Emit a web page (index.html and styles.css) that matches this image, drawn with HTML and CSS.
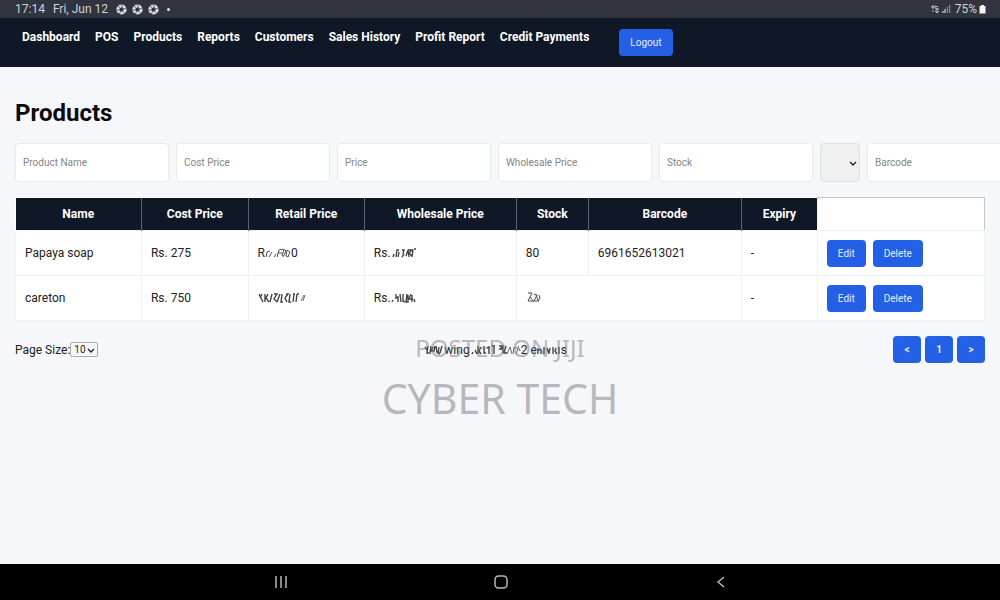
FILE: index.html
```html
<!DOCTYPE html>
<html lang="en">
    <head>
        <meta charset="UTF-8" />
        <meta name="viewport" content="width=device-width, initial-scale=1.0" />
        <title>Products</title>
        <link rel="stylesheet" href="styles.css">
    </head>

    <body>
        <div class="status">
            <span>17:14</span>
            <span>Fri, Jun 12</span>
            <div class="status-icons">
                <svg width="11" height="11" viewBox="0 0 11 11"><circle cx="5.5" cy="5.5" r="3.6" /><path d="M5.5 0.5L6.5 4M10.2 4L7 5.5M8.7 9.3L6.5 7M3.5 10L4.5 7M0.8 6.5L4 5.5M2 2L4.5 4" /></svg>
                <svg width="11" height="11" viewBox="0 0 11 11"><circle cx="5.5" cy="5.5" r="3.6" /><path d="M5.5 0.5L6.5 4M10.2 4L7 5.5M8.7 9.3L6.5 7M3.5 10L4.5 7M0.8 6.5L4 5.5M2 2L4.5 4" /></svg>
                <svg width="11" height="11" viewBox="0 0 11 11"><circle cx="5.5" cy="5.5" r="3.6" /><path d="M5.5 0.5L6.5 4M10.2 4L7 5.5M8.7 9.3L6.5 7M3.5 10L4.5 7M0.8 6.5L4 5.5M2 2L4.5 4" /></svg>
            </div>
            <span class="dot"></span>
            <div class="status-right">
                <svg width="10" height="10" viewBox="0 0 10 10"><path d="M1 3h5M3 1v4M5 2l3 1M5 5h4M7 4v5M5 7l2 2l2-2M3 6v2" fill="none" stroke="#c4c6ca" /></svg>
                <svg width="9" height="10" viewBox="0 0 9 10"><path d="M1 9V7M3 9V5" stroke="#c4c6ca" stroke-width="1.3" /><path d="M5.3 9V3M7.6 9V1" stroke="#858891" stroke-width="1.3" /></svg>
                <span class="percent">75%</span>
                <svg width="7" height="10" viewBox="0 0 7 10"><path d="M2 1h3v1h1.5v7.5h-6V2H2z" fill="#f4f4f4" /></svg>
            </div>
        </div>

        <nav class="navbar">
            <a href="#">Dashboard</a>
            <a href="#">POS</a>
            <a href="#">Products</a>
            <a href="#">Reports</a>
            <a href="#">Customers</a>
            <a href="#">Sales History</a>
            <a href="#">Profit Report</a>
            <a href="#">Credit Payments</a>
            <button class="btn logout">Logout</button>
        </nav>

        <main class="content">
            <h1>Products</h1>

            <form class="product-form">
                <input type="text" placeholder="Product Name" aria-label="Product Name" />
                <input type="text" placeholder="Cost Price" aria-label="Cost Price" />
                <input type="text" placeholder="Price" aria-label="Price" />
                <input type="text" placeholder="Wholesale Price" aria-label="Wholesale Price" />
                <input type="text" placeholder="Stock" aria-label="Stock" />
                <div class="select-wrap">
                    <select class="unit" aria-label="Unit"><option></option></select>
                    <svg class="arrow" width="8" height="6" viewBox="0 0 8 6"><path d="M1 1l3 3l3-3" /></svg>
                </div>
                <input type="text" placeholder="Barcode" aria-label="Barcode" />
            </form>

            <table class="products">
                <colgroup>
                    <col class="col-name">
                    <col class="col-cost">
                    <col class="col-retail">
                    <col class="col-wholesale">
                    <col class="col-stock">
                    <col class="col-barcode">
                    <col class="col-expiry">
                    <col>
                </colgroup>
                <thead>
                    <tr>
                        <th>Name</th>
                        <th>Cost Price</th>
                        <th>Retail Price</th>
                        <th>Wholesale Price</th>
                        <th>Stock</th>
                        <th>Barcode</th>
                        <th>Expiry</th>
                        <td class="empty-head"></td>
                    </tr>
                </thead>
                <tbody>
                    <tr>
                        <td>Papaya soap</td>
                        <td>Rs. 275</td>
                        <td>R<svg class="smudge" width="26" height="10" viewBox="0 0 26 10"><path d="M1 9l1-5l3-1M4 9l3-5M9 9l2-3M12 9l2-7l4-1M13 5h4M17 8l2-7l2 2l-3 6M21 8l1-6l3 2l-2 5z" /></svg>0</td>
                        <td>Rs.<svg class="smudge heavy" width="25" height="10" viewBox="0 0 25 10"><path d="M2 9l1-3M5 9l1-7l2 0M8 4l-1 5M11 2h2l-1 4M11 9l2-3M15 8l2-6l1 7M17 2h4l-3 3l3 3M22 2l-1 7M23 1h2" /></svg></td>
                        <td>80</td>
                        <td>6961652613021</td>
                        <td>-</td>
                        <td class="actions">
                            <button class="btn">Edit</button>
                            <button class="btn">Delete</button>
                        </td>
                    </tr>
                    <tr>
                        <td>careton</td>
                        <td>Rs. 750</td>
                        <td><svg class="smudge heavy" width="48" height="10" viewBox="0 0 48 10"><path d="M1 1l4 8M4 1l-2 4M7 1v8M10 1l-2 4l3 4M14 1l-2 8M16 1h3l-3 5l3 3M22 1l-3 8M24 1l-1 8h2M28 1h2l-3 4l2 4M32 1l-1 8h2M35 1h2M36 1l-1 8M39 1l-1 8M41 1h-2" /><path class="thin" d="M43 8l3-6M47 2l-2 6" /></svg></td>
                        <td>Rs.<svg class="smudge heavy" width="25" height="10" viewBox="0 0 25 10"><path d="M1 9l1-2M5 1v4l2-1v5M9 1l1 8M12 1v7l2 1M16 1l-1 8h2V2M20 1l-2 5h4M21 2v7M23 6l1 3" /></svg></td>
                        <td class="open"><svg class="smudge" width="15" height="11" viewBox="0 0 15 11"><path d="M2 1h4l-4 8h5M4 5l4 5M8 2l3 1l-3 6h5M10 3l2 5M13 3l1 3l-2 3" /></svg></td>
                        <td class="open"></td>
                        <td>-</td>
                        <td class="actions">
                            <button class="btn">Edit</button>
                            <button class="btn">Delete</button>
                        </td>
                    </tr>
                </tbody>
            </table>

            <div class="table-footer">
                <div class="page-size">
                    <label for="size">Page Size:</label>
                    <div class="select-wrap">
                        <select id="size" class="size"><option>10</option></select>
                        <svg class="arrow" width="8" height="6" viewBox="0 0 8 6"><path d="M1 1l3 3l3-3" /></svg>
                    </div>
                </div>
                <div class="entries"><svg class="smudge heavy" width="20" height="10" viewBox="0 0 20 10"><path d="M1 2l2 3M4 1l-1 7h2M7 1l-1 8M9 2l-2 4h3l1-5M12 1l1 7M15 2l-1 6l2 1M18 1l-2 7" /></svg>wing<svg class="smudge heavy" width="27" height="10" viewBox="0 0 27 10"><path d="M2 9l1-2M5 5l2 4M8 1v8M11 2l-2 4l2 3M14 1v7h2M17 3l2-1v7M22 1l2-1v9" /></svg><svg class="smudge heavy" width="24" height="10" viewBox="0 0 24 10"><path d="M2 1h4l-3 3h3M6 2v6M9 1l-2 7h3" /><path class="thin" d="M10 9l3-7l2 7M16 9l1-7M18 2l3 2l-2 5M21 1l2 5" /></svg>2 e<svg class="smudge heavy" width="24" height="10" viewBox="0 0 24 10"><path d="M1 9V4l3 1v4M7 2v7M10 3l2 6M13 3l-1 5M16 2v7M19 3l-1 3l2 3M22 2v7" /></svg>s</div>
                <div class="pages">
                    <button class="btn">&lt;</button>
                    <button class="btn">1</button>
                    <button class="btn">&gt;</button>
                </div>
            </div>
        </main>

        <div class="watermark">
            <div class="posted">POSTED ON JIJI</div>
            <div class="seller">CYBER TECH</div>
        </div>

        <footer class="android-bar">
            <svg width="14" height="14" viewBox="0 0 14 14"><path d="M2 1v12M7 1v12M12 1v12" /></svg>
            <svg width="14" height="14" viewBox="0 0 14 14"><rect x="1" y="1" width="12" height="12" rx="3.5" /></svg>
            <svg width="14" height="14" viewBox="0 0 14 14"><path d="M10 2L4 7l6 5" /></svg>
        </footer>
    </body>
</html>
```
FILE: styles.css
```css
* {
    box-sizing: border-box;
}
body {
    position: relative;
    display: flex;
    flex-direction: column;
    min-height: 100vh;
    margin: 0;
    overflow-x: hidden;
    background-color: #f5f7fb;
    color: #222;
    font-family: Roboto, "Liberation Sans", sans-serif;
    font-size: 12px;
}

/* status bar */
.status {
    display: flex;
    align-items: center;
    gap: 8px;
    height: 18px;
    padding: 0 14px 0 15px;
    background-color: #31343e;
    color: #d0d2d6;
}
.status-icons {
    display: flex;
    gap: 5px;
}
.status-icons circle {
    fill: none;
    stroke: #e2e3e6;
    stroke-width: 3;
}
.status-icons path {
    stroke: #31343e;
    stroke-width: 0.8;
}
.dot {
    width: 3px;
    height: 3px;
    border-radius: 50%;
    background-color: #e2e3e6;
}
.status-right {
    display: flex;
    align-items: center;
    gap: 2px;
    margin-left: auto;
}
.percent {
    margin-left: 2px;
}

/* navigation */
.navbar {
    display: flex;
    align-items: flex-start;
    gap: 15px;
    padding: 11px 22px;
    background-color: #101828;
}
.navbar a {
    color: #fff;
    font-weight: bold;
    line-height: 16px;
    text-decoration: none;
}
.btn {
    height: 27px;
    padding: 0 11px;
    border: none;
    border-radius: 4px;
    background-color: #2360e6;
    color: #e3ecff;
    font-family: inherit;
    font-size: 10px;
}
.logout {
    margin-left: 15px;
}

.content {
    flex: 1;
    padding: 32px 15px;
}
h1 {
    margin: 0 0 16px;
    color: #0a0a0a;
    font-size: 24px;
    line-height: 28px;
}

/* new product form */
.product-form {
    display: flex;
    gap: 7px;
    margin-bottom: 15px;
}
.product-form input {
    flex: none;
    width: 154px;
    height: 39px;
    padding: 0 7px;
    border: 1px solid #e8eaee;
    border-radius: 4px;
    background-color: #fff;
    font-family: inherit;
    font-size: 10px;
}
.product-form input::placeholder {
    color: #858585;
}
.select-wrap {
    position: relative;
    display: flex;
}
.select-wrap select {
    appearance: none;
    font-family: inherit;
}
.unit {
    width: 40px;
    height: 39px;
    border: 1px solid #e0e1e4;
    border-radius: 4px;
    background-color: #efefef;
}
.arrow {
    position: absolute;
    top: 50%;
    right: 3px;
    margin-top: -2px;
    fill: none;
    stroke: #222;
    stroke-width: 1.4;
    pointer-events: none;
}

/* products table */
.products {
    width: 100%;
    table-layout: fixed;
    border-collapse: collapse;
    background-color: #fff;
}
.col-name { width: 13%; }
.col-cost { width: 11%; }
.col-retail { width: 12%; }
.col-wholesale { width: 152px; }
.col-stock { width: 72px; }
.col-barcode { width: 153px; }
.col-expiry { width: 76px; }
.products th {
    height: 33px;
    padding: 0;
    border-right: 1px solid #5b6270;
    background-color: #101828;
    color: #fff;
}
.products th:nth-child(7) {
    border-right: none;
}
.products td {
    height: 45px;
    padding: 0 9px;
    border: 1px solid #f0f1f3;
}
.products .empty-head {
    height: 33px;
    border-top: 1px solid #c4c6ca;
    border-right: 1px solid #c4c6ca;
}
.products .open {
    border-left: none;
    border-right: none;
}
.actions .btn {
    margin-right: 4px;
}
.smudge {
    vertical-align: -1px;
    fill: none;
    stroke: #4a4a4a;
}
.heavy {
    stroke: #444;
    stroke-width: 1.4;
}
.thin {
    stroke-width: 0.8;
}

/* below the table */
.table-footer {
    display: flex;
    align-items: center;
    justify-content: space-between;
    margin-top: 15px;
}
.page-size {
    display: flex;
    align-items: center;
}
.size {
    width: 28px;
    height: 15px;
    padding: 0 3px;
    border: 1px solid #aaa;
    border-radius: 2px;
    background-color: #f5f7fb;
    color: #222;
    font-size: 10px;
}
.pages {
    display: flex;
    gap: 4px;
}
.pages .btn {
    width: 28px;
    padding: 0;
    font-weight: bold;
}

/* stamp over the page */
.watermark {
    position: absolute;
    top: 332px;
    left: 0;
    right: 0;
    color: rgba(120, 122, 128, 0.5);
    font-family: "Noto Sans", sans-serif;
    text-align: center;
    pointer-events: none;
}
.posted {
    font-size: 24px;
    line-height: 32px;
}
.seller {
    margin-top: 6px;
    font-size: 41px;
    line-height: 56px;
}

/* system buttons */
.android-bar {
    display: flex;
    align-items: center;
    justify-content: space-between;
    height: 36px;
    padding: 0 272px 0 274px;
    background-color: #000;
}
.android-bar svg {
    fill: none;
    stroke: #b8b8b8;
    stroke-width: 1.5;
}
```
